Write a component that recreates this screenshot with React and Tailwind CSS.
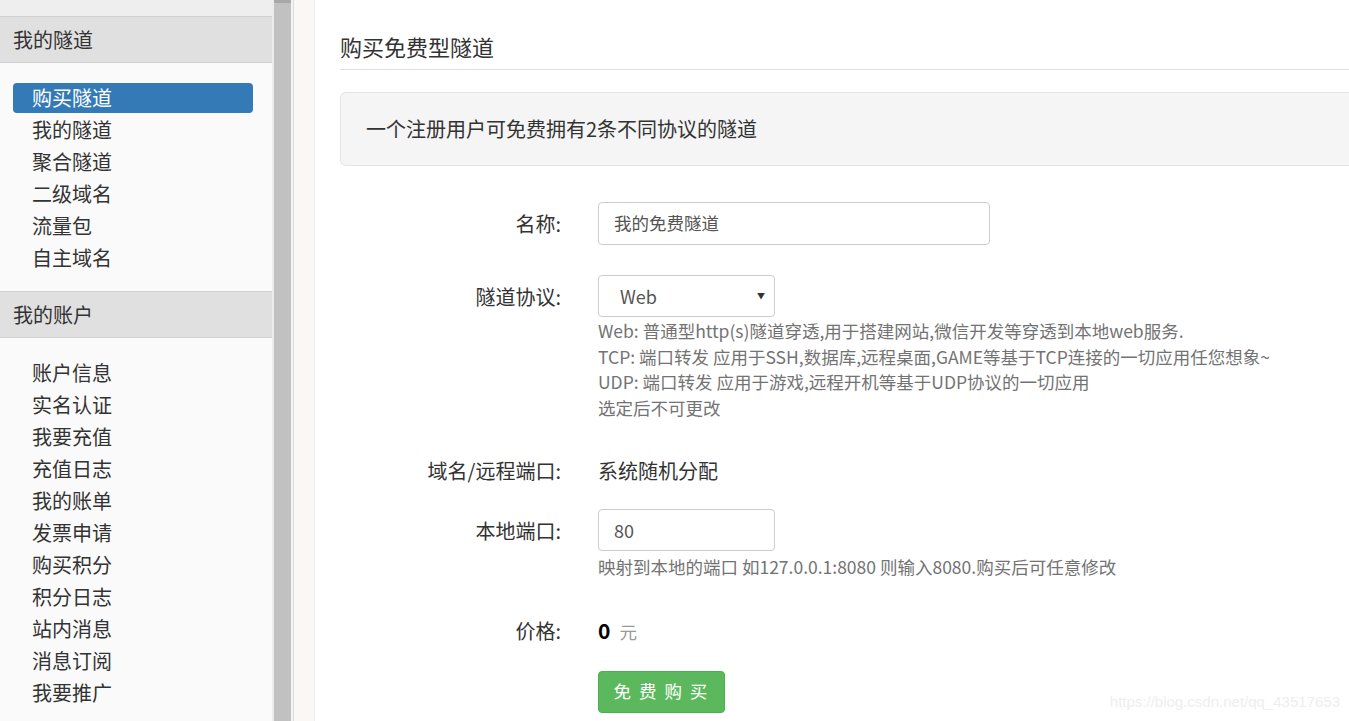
import React from 'react'

const FONT = { fontFamily: '"Microsoft YaHei", "Noto Sans CJK SC", "Noto Sans", sans-serif' }

const tunnelLinks = ['购买隧道', '我的隧道', '聚合隧道', '二级域名', '流量包', '自主域名']
const accountLinks = ['账户信息', '实名认证', '我要充值', '充值日志', '我的账单', '发票申请', '购买积分', '积分日志', '站内消息', '消息订阅', '我要推广']

function NavGroup({ title, items, active }) {
  return (
    <div>
      <div className="h-[47px] border-y border-[#d0d0d0] bg-[#e0e0e0] pl-[13px] text-[20px] leading-[45px] text-[#333]">
        {title}
      </div>
      <ul className="pt-[19px] pb-[17px]">
        {items.map((item) => (
          <li key={item} className="h-[32px] py-px pl-[13px] pr-[19px]">
            <div
              className={`h-[30px] rounded pl-[19px] text-[20px] leading-[30px] ${
                item === active ? 'bg-[#337ab7] text-white' : 'text-[#333]'
              }`}
            >
              {item}
            </div>
          </li>
        ))}
      </ul>
    </div>
  )
}

function Sidebar() {
  return (
    <aside className="w-[272px] shrink-0 bg-[#fafafa]">
      <div className="h-[16px] bg-[#eeeeee]" />
      <NavGroup title="我的隧道" items={tunnelLinks} active="购买隧道" />
      <NavGroup title="我的账户" items={accountLinks} />
    </aside>
  )
}

function Label({ children }) {
  return <div className="w-[221px] shrink-0 text-right text-[20px] leading-[43px] text-[#333]">{children}</div>
}

export default function App() {
  return (
    <div className="relative flex h-[721px] w-[1349px] overflow-hidden bg-white" style={FONT}>
      <Sidebar />
      <div className="w-[2px] shrink-0 bg-[#ececec]" />
      <div className="flex w-[17px] shrink-0 flex-col bg-[#c1c1c1]">
        <div className="h-[3px] bg-[#a8a8a8]" />
      </div>
      <div className="w-[3px] shrink-0 border-r border-[#dcdcdc] bg-[#f4f4f4]" />
      <div className="w-[21px] shrink-0 border-r border-[#eeeeee] bg-[#f9f8f5]" />

      <main className="shrink-0 pl-[25px]">
        <div className="w-[1040px]">
          <h1 className="h-[70px] border-b border-[#e2e2e2] pt-[31px] text-[22px] leading-[30px] font-normal text-[#333]">
            购买免费型隧道
          </h1>

          <div className="mt-[22px] h-[74px] rounded-md border border-[#e3e3e3] bg-[#f5f5f5] pl-[25px] text-[20px] leading-[72px] text-[#333]">
            一个注册用户可免费拥有2条不同协议的隧道
          </div>

          <div className="mt-[36px] flex">
            <Label>名称:</Label>
            <div className="ml-[37px] flex h-[43px] w-[392px] items-center rounded border border-[#cccccc] px-[15px] text-[17.5px] text-[#555]">
              我的免费隧道
            </div>
          </div>

          <div className="mt-[30px] flex">
            <Label>隧道协议:</Label>
            <div className="ml-[37px]">
              <div className="flex h-[42px] w-[177px] items-center justify-between rounded border border-[#cccccc] pl-[21px] pr-[9px] text-[18px] text-[#555]">
                <span>Web</span>
                <span className="text-[8px] text-[#333]">▼</span>
              </div>
              <div className="mt-px text-[17.5px] leading-[25.5px] text-[#737373]">
                <p>Web: 普通型http(s)隧道穿透,用于搭建网站,微信开发等穿透到本地web服务.</p>
                <p>TCP: 端口转发 应用于SSH,数据库,远程桌面,GAME等基于TCP连接的一切应用任您想象~</p>
                <p>UDP: 端口转发 应用于游戏,远程开机等基于UDP协议的一切应用</p>
                <p>选定后不可更改</p>
              </div>
            </div>
          </div>

          <div className="mt-[29px] flex">
            <Label>域名/远程端口:</Label>
            <div className="ml-[37px] text-[20px] leading-[43px] text-[#333]">系统随机分配</div>
          </div>

          <div className="mt-[17px] flex">
            <Label>本地端口:</Label>
            <div className="ml-[37px]">
              <div className="flex h-[42px] w-[177px] items-center rounded border border-[#cccccc] px-[15px] text-[18px] text-[#555]">
                80
              </div>
              <p className="mt-[3px] text-[17.5px] leading-[25.5px] text-[#737373]">
                映射到本地的端口 如127.0.0.1:8080 则输入8080.购买后可任意修改
              </p>
            </div>
          </div>

          <div className="mt-[29px] flex">
            <Label>价格:</Label>
            <div className="ml-[37px] flex items-baseline gap-[9px] leading-[43px]">
              <span className="text-[21px] font-bold text-black">0</span>
              <span className="text-[17.5px] text-[#999]">元</span>
            </div>
          </div>

          <div className="mt-[18px] pl-[258px]">
            <button className="h-[42px] w-[127px] rounded border border-[#4cae4c] bg-[#5cb85c] text-[17.5px] tracking-[2px] text-white">
              免 费 购 买
            </button>
          </div>
        </div>
      </main>

      <div className="absolute bottom-[8px] right-[9px] text-[15px] text-[#eeeeee]" style={{ fontFamily: '"Liberation Sans", Arial, sans-serif' }}>
        https://blog.csdn.net/qq_43517653
      </div>
    </div>
  )
}
